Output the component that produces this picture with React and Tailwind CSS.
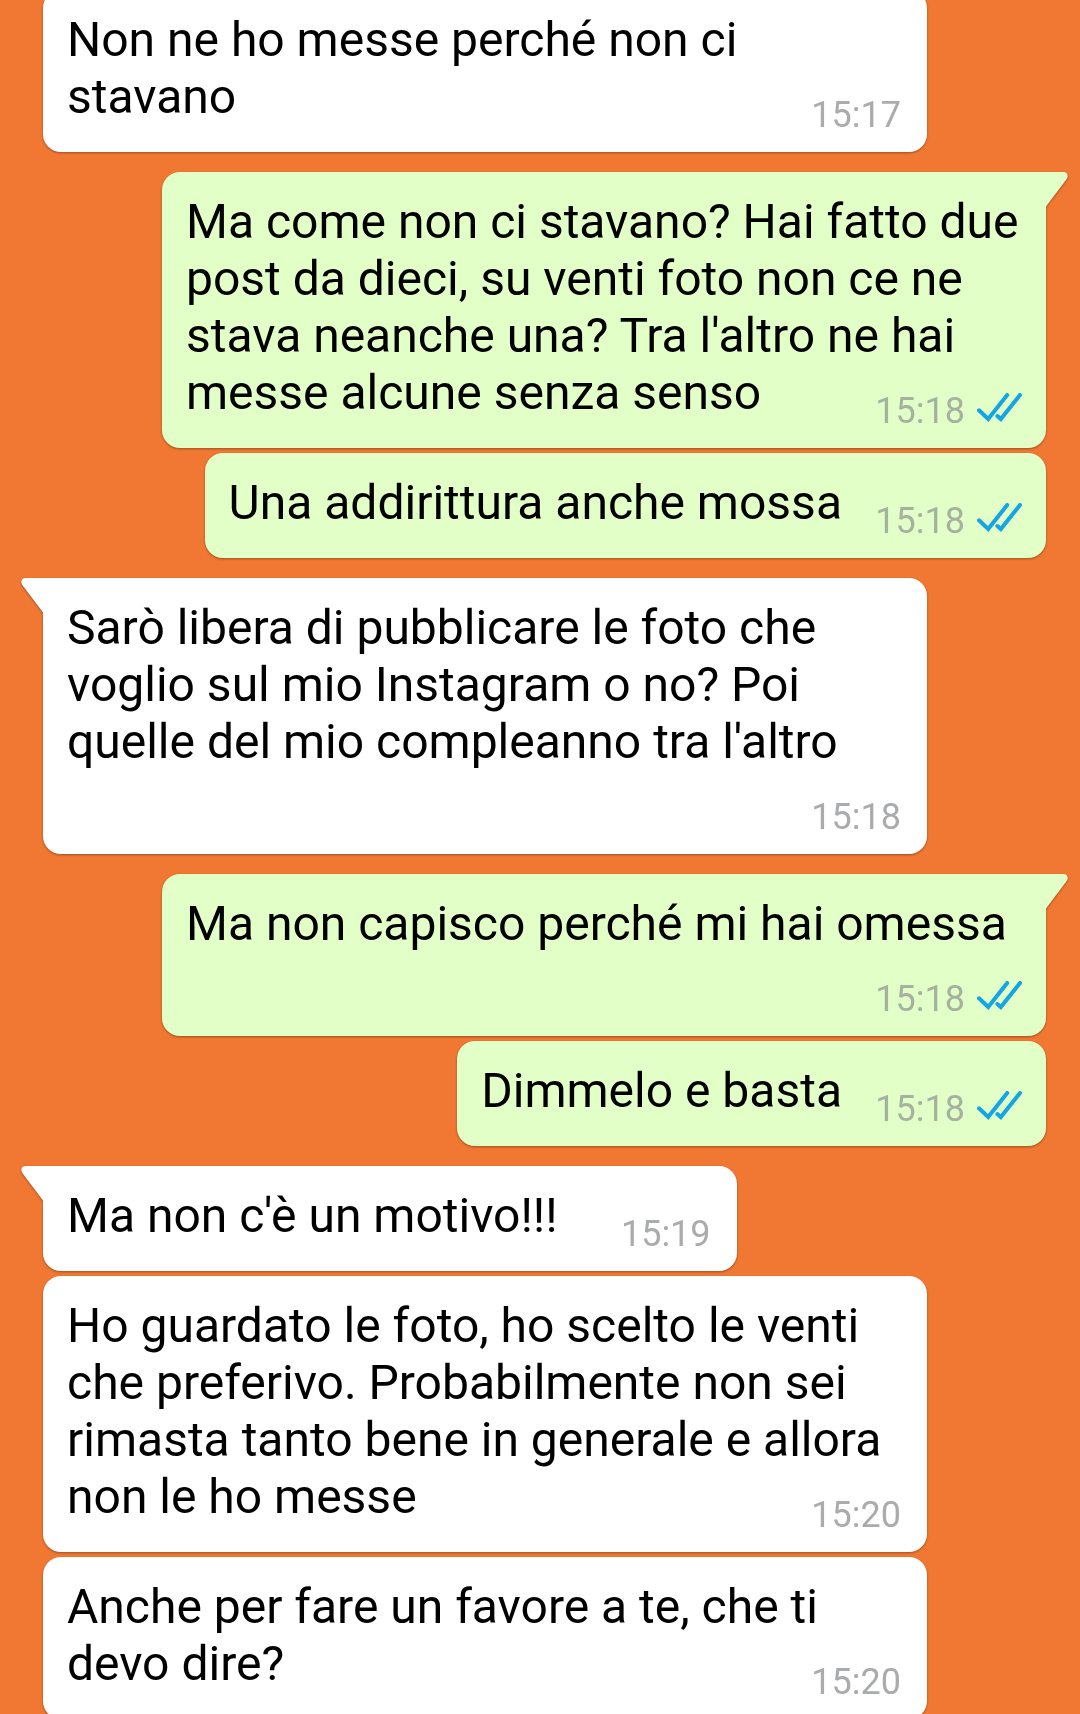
import React from 'react'
import clsx from 'clsx'

// first: opens a group of messages by the same sender, so it gets the tail
const messages = [
  { id: 1, text: 'Non ne ho messe perché non ci stavano', time: '15:17' },
  { id: 2, text: "Ma come non ci stavano? Hai fatto due post da dieci, su venti foto non ce ne stava neanche una? Tra l'altro ne hai messe alcune senza senso", time: '15:18', mine: true, first: true },
  { id: 3, text: 'Una addirittura anche mossa', time: '15:18', mine: true },
  { id: 4, text: "Sarò libera di pubblicare le foto che voglio sul mio Instagram o no? Poi quelle del mio compleanno tra l'altro", time: '15:18', first: true },
  { id: 5, text: 'Ma non capisco perché mi hai omessa', time: '15:18', mine: true, first: true },
  { id: 6, text: 'Dimmelo e basta', time: '15:18', mine: true },
  { id: 7, text: "Ma non c'è un motivo!!!", time: '15:19', first: true },
  { id: 8, text: 'Ho guardato le foto, ho scelto le venti che preferivo. Probabilmente non sei rimasta tanto bene in generale e allora non le ho messe', time: '15:20' },
  { id: 9, text: 'Anche per fare un favore a te, che ti devo dire?', time: '15:20' },
]

function Ticks() {
  return (
    <svg
      className="h-[30px] w-[45px]"
      viewBox="0 0 45 30"
      fill="none"
      stroke="#14a5e3"
      strokeWidth="4"
      strokeLinecap="round"
      aria-label="Letto"
    >
      <path d="M2 17.3L11.2 26L30.2 2M20.4 23L23.8 26L43 2" />
    </svg>
  )
}

function Tail({ mine }) {
  return (
    <svg
      className={clsx(
        'absolute top-0 h-[35px] w-[23px]',
        mine ? 'left-full -ml-px text-[#e1ffc7]' : 'right-full -mr-px -scale-x-100 text-white'
      )}
      viewBox="0 0 23 35"
      fill="currentColor"
    >
      <path d="M0 0H19Q23 0.5 22.6 4.5Q22.4 6 21.5 7.2L1 34.5H0Z" />
    </svg>
  )
}

function Message({ text, time, mine, first }) {
  return (
    <li
      className={clsx(
        'relative max-w-[calc(100%-119px)] shrink-0 rounded-[18px] px-6 pt-[21px] pb-[17px] drop-shadow-[0_1px_1px_rgba(0,0,0,0.35)]',
        mine ? 'self-end bg-[#e1ffc7]' : 'self-start bg-white',
        first ? 'mt-5' : 'mt-[5px]',
        first && (mine ? 'rounded-tr-none' : 'rounded-tl-none')
      )}
    >
      {first && <Tail mine={mine} />}
      <p>
        {text}
        {/* keeps room for the time, and drops to a new line when the last one is full */}
        <span className={clsx('inline-block', mine ? 'w-[180px]' : 'w-[155px]')} />
      </p>
      <div
        className={clsx(
          '-mt-[30px] flex items-baseline justify-end gap-3 text-[36px] leading-10',
          mine ? 'text-[#a5b2a0]' : 'pr-0.5 text-[#a9abac]'
        )}
      >
        <time>{time}</time>
        {mine && <Ticks />}
      </div>
    </li>
  )
}

export default function App() {
  return (
    <main className="h-screen overflow-hidden bg-[#f07832] font-[Roboto,sans-serif] text-[48px] leading-[57px] text-black">
      {/* scrolled a little past the top of the first message */}
      <ul className="-mt-[15px] flex flex-col pr-[34px] pl-[43px]">
        {messages.map((message) => (
          <Message key={message.id} {...message} />
        ))}
      </ul>
    </main>
  )
}
